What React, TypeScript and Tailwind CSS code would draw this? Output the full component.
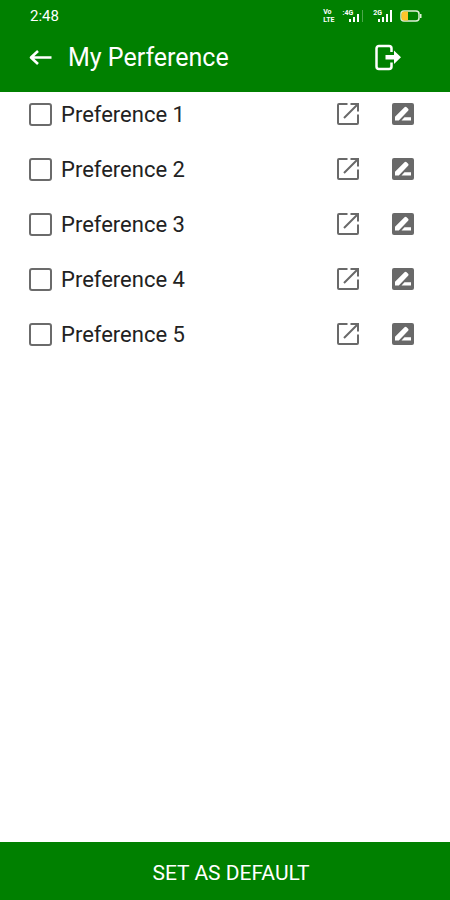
import { useState } from "react";

interface Preference {
  id: number;
  name: string;
}

const preferences: Preference[] = [
  { id: 1, name: "Preference 1" },
  { id: 2, name: "Preference 2" },
  { id: 3, name: "Preference 3" },
  { id: 4, name: "Preference 4" },
  { id: 5, name: "Preference 5" },
];

function BackIcon() {
  return (
    <svg width="24" height="20" viewBox="0 0 24 20" fill="none" stroke="currentColor" strokeWidth="2.6">
      <path d="M23.500 9.500H3.500M10 3L3 9.500l7 6.500" strokeLinejoin="round" />
    </svg>
  );
}

function ExitIcon() {
  return (
    <svg width="28" height="28" viewBox="0 0 28 28">
      <path
        d="M17.500 8V4.500a2.500 2.500 0 0 0-2.500-2.500H5a2.500 2.500 0 0 0-2.500 2.500v18A2.500 2.500 0 0 0 5 25h10a2.500 2.500 0 0 0 2.500-2.500v-4"
        fill="none"
        stroke="currentColor"
        strokeWidth="2.5"
      />
      <path d="M11.500 11H20V6.500l7 6.700-7 6.700v-4.400h-8.500z" fill="currentColor" />
    </svg>
  );
}

function OpenIcon() {
  return (
    <svg width="24" height="24" viewBox="0 0 24 24" fill="none" stroke="currentColor" strokeWidth="2">
      <path d="M11.500 2H3a1 1 0 0 0-1 1v18a1 1 0 0 0 1 1h18a1 1 0 0 0 1-1v-8.500M14.500 2H22v7.500M21.500 2.500L8 16" />
    </svg>
  );
}

function EditIcon() {
  return (
    <svg width="24" height="24" viewBox="0 0 24 24">
      <rect x="1" y="1" width="22" height="22" rx="2" fill="currentColor" />
      <path d="M4 18.500v-3.800L13.500 5.200a1.500 1.500 0 0 1 2.100 0l1.500 1.500a1.500 1.500 0 0 1 0 2.100L7.800 18.500zM10.500 18.500l3-3.200H20v3.200z" fill="#fff" />
    </svg>
  );
}

function SignalIcon() {
  return (
    <svg width="14" height="12" viewBox="0 0 14 12" fill="currentColor">
      <path d="M0 9h2v3H0zM4 7h2v5H4zM8 4h2v8H8zM12 0h2v12h-2z" />
    </svg>
  );
}

function MobileSignalIcon() {
  return (
    <svg width="16" height="12" viewBox="0 0 16 12" fill="currentColor">
      <path d="M0 9h2v3H0zM4 7h2v5H4zM8 4h2v8H8z" />
      <path d="M13 0h1v12h-1z" opacity=".3" />
    </svg>
  );
}

function BatteryIcon() {
  return (
    <svg width="22" height="12" viewBox="0 0 22 12">
      <rect x="1" y="1" width="18" height="10" rx="3" fill="none" stroke="#dff0d8" strokeWidth="1.500" />
      <path d="M4 1.500h4v9H4a2.500 2.500 0 0 1-2.500-2.500V4a2.500 2.500 0 0 1 2.500-2.500z" fill="#ffc62b" />
      <path d="M20 4h1.500v4H20z" fill="#dff0d8" />
    </svg>
  );
}

function StatusBar() {
  return (
    <div className="flex h-8 items-center justify-between pr-7 pl-[30px]">
      <span className="text-[15px] leading-4">2:48</span>
      <div className="flex items-center gap-2">
        <div className="flex flex-col text-[7px] leading-[8px] font-bold">
          <span>Vo</span>
          <span>LTE</span>
        </div>
        <div className="flex items-end">
          <span className="-mr-1 self-start text-[7px] leading-[6px] font-bold">:4G</span>
          <MobileSignalIcon />
        </div>
        <div className="flex items-end">
          <span className="-mr-1 self-start text-[7px] leading-[6px] font-bold">2G</span>
          <SignalIcon />
        </div>
        <BatteryIcon />
      </div>
    </div>
  );
}

export default function App() {
  const [selected, setSelected] = useState<number[]>([]);

  const toggle = (id: number) =>
    setSelected((prev) =>
      prev.includes(id) ? prev.filter((p) => p !== id) : [...prev, id]
    );

  return (
    <div className="flex min-h-screen flex-col bg-white font-[Roboto,sans-serif]">
      <header className="bg-[#008000] text-white">
        <StatusBar />
        <div className="flex h-[60px] items-center px-7 pb-2">
          <button type="button" aria-label="Back">
            <BackIcon />
          </button>
          <h1 className="ml-4 flex-1 text-[25px] leading-[34px]">My Perference</h1>
          <button type="button" aria-label="Log out" className="mr-5">
            <ExitIcon />
          </button>
        </div>
      </header>

      <main className="flex-1">
        <ul className="flex flex-col gap-[11px]">
          {preferences.map((p) => (
            <li key={p.id} className="flex h-11 items-center pr-[35px] pl-[29px]">
              <label className="flex flex-1 items-center gap-[9px] text-[22px] leading-[33px] text-[#222222]">
                <input
                  type="checkbox"
                  checked={selected.includes(p.id)}
                  onChange={() => toggle(p.id)}
                  className="size-[23px] appearance-none rounded-[3px] border-2 border-[#6b6b6b] checked:bg-[#008000]"
                />
                {p.name}
              </label>
              <div className="flex gap-[31px] text-[#696969]">
                <button type="button" aria-label={`Open ${p.name}`}>
                  <OpenIcon />
                </button>
                <button type="button" aria-label={`Edit ${p.name}`}>
                  <EditIcon />
                </button>
              </div>
            </li>
          ))}
        </ul>
      </main>

      <button type="button" className="h-[58px] bg-[#008000] pt-1.5 pl-3 text-[21px] text-white">
        SET AS DEFAULT
      </button>
    </div>
  );
}
